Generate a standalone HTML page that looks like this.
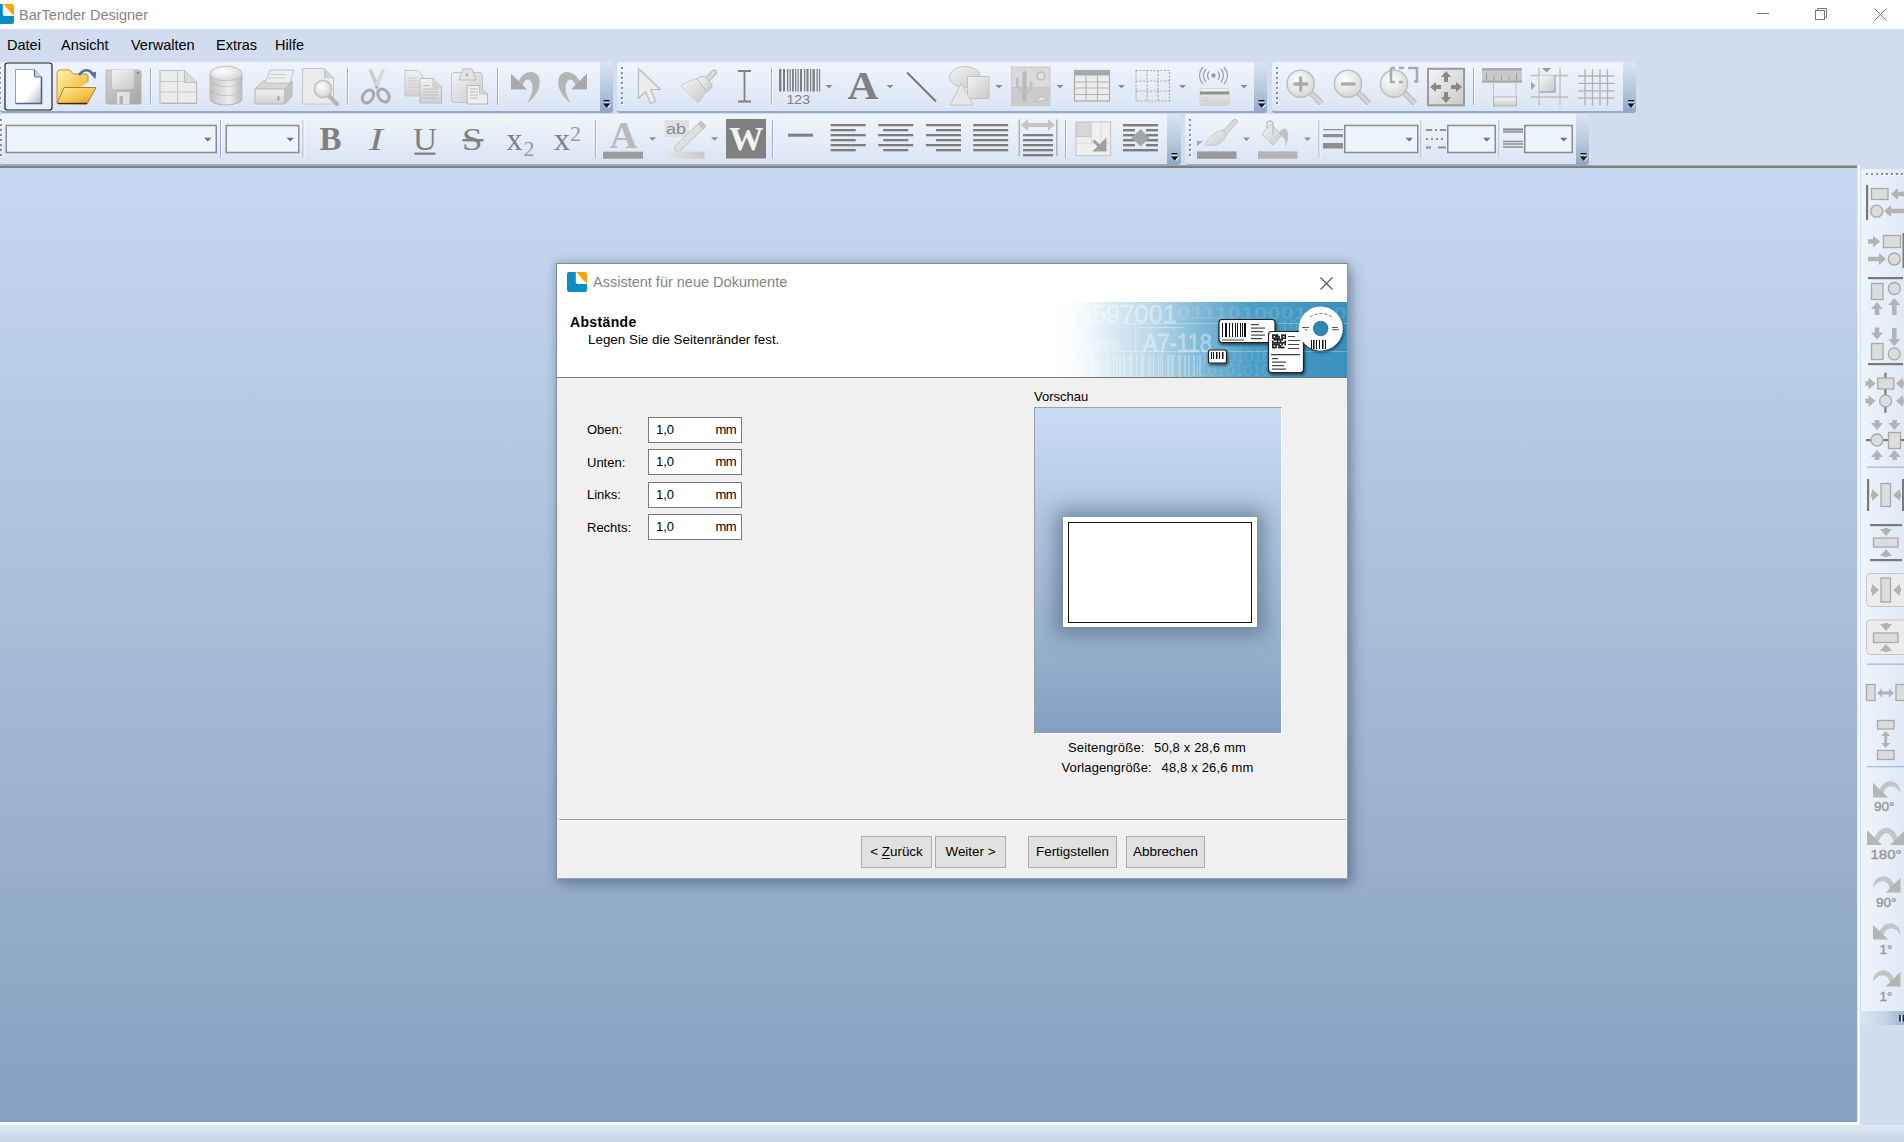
<!DOCTYPE html>
<html><head><meta charset="utf-8">
<style>
*{box-sizing:border-box;margin:0;padding:0}
html,body{width:1904px;height:1142px;overflow:hidden;background:#d1ddee;font-family:"Liberation Sans",sans-serif;position:relative}
.abs{position:absolute}
#title{left:0;top:0;width:1904px;height:29px;background:#fff}
#menu{left:0;top:29px;width:1904px;height:32px;background:#d1ddee}
#menu span{position:absolute;top:8px;font-size:14.5px;color:#000}
.tb{position:absolute;background:linear-gradient(#f0f5fc,#e3ebf7 60%,#d9e4f3);border-bottom:1px solid #94abcb;border-radius:3px 0 0 3px}
.chev{position:absolute;background:linear-gradient(#dbe5f2,#b3c4dc 60%,#8ea6c6);border-radius:0 3px 3px 0}
.grip{position:absolute;width:3px;background:repeating-linear-gradient(#7b92b5 0 2px,transparent 2px 5px)}
.sep{position:absolute;width:1px;background:#99aecb;border-right:1px solid #fff}
#canvas{left:0;top:168px;width:1857px;height:954px;background:linear-gradient(#c6d9f0,#a8bbd7 50%,#84a1c0)}
#status{left:0;top:1125px;width:1904px;height:17px;background:linear-gradient(#e0e9f5,#c5d3e6)}

.lbl{font-size:13px;color:#000;white-space:nowrap}
.inp{width:94px;height:26px;background:#fff;border:1px solid #7a7a7a;font-size:13px}
.inp .v{position:absolute;left:7px;top:4px}
.inp .u{position:absolute;right:5px;top:4px;letter-spacing:-0.6px}
.btn{height:32px;background:#e1e1e1;border:1px solid #adadad;font-size:13.4px;text-align:center;line-height:30px;color:#000;white-space:nowrap}
.btn u{text-decoration:underline;text-underline-offset:2px}
</style></head><body>
<div id="title" class="abs">
  <svg class="abs" style="left:-6.3px;top:3.8px" width="20" height="20" viewBox="0 0 20 20"><rect x="0" y="0" width="20" height="20" rx="2" fill="#0a8cc4"/><path d="M8.8 0H20V12H10.8a2 2 0 0 1-2-2Z" fill="#fff"/><path d="M9.2 0H18a2 2 0 0 1 2 2V12Z" fill="#ffa10a"/></svg>
  <div class="abs" style="left:19px;top:6.5px;font-size:14.5px;color:#858585">BarTender Designer</div>
  <div class="abs" style="left:1757px;top:13px;width:12px;height:1px;background:#777"></div>
  <svg class="abs" style="left:1815px;top:8px" width="14" height="14"><rect x="0.5" y="2.5" width="9" height="9" fill="none" stroke="#777"/><path d="M2.5 2.5V0.5H11.5V9.5H9.5" fill="none" stroke="#777"/></svg>
  <svg class="abs" style="left:1873.5px;top:8px" width="14" height="14"><path d="M0.5 0.5L12.5 12.5M12.5 0.5L0.5 12.5" stroke="#777" stroke-width="1"/></svg>
</div>
<div id="menu" class="abs">
  <span style="left:7px">Datei</span>
  <span style="left:61px">Ansicht</span>
  <span style="left:131px">Verwalten</span>
  <span style="left:216px">Extras</span>
  <span style="left:275px">Hilfe</span>
</div>
<!-- toolbar row 1 -->
<div class="tb" style="left:0;top:62px;width:600px;height:51px;border-bottom-width:2px"></div>
<div class="chev" style="left:600px;top:62px;width:13px;height:51px"></div>
<div class="tb" style="left:617px;top:62px;width:637px;height:51px;border-bottom-width:2px"></div>
<div class="chev" style="left:1254px;top:62px;width:13px;height:51px"></div>
<div class="tb" style="left:1272px;top:62px;width:351px;height:51px;border-bottom-width:2px"></div>
<div class="chev" style="left:1623px;top:62px;width:13px;height:51px"></div>
<!-- toolbar row 2 -->
<div class="tb" style="left:0;top:114px;width:1167px;height:51px"></div>
<div class="chev" style="left:1167px;top:114px;width:14px;height:51px"></div>
<div class="tb" style="left:1185px;top:114px;width:391px;height:51px"></div>
<div class="chev" style="left:1576px;top:114px;width:13px;height:51px"></div>
<div class="abs" style="left:0;top:165px;width:1857px;height:1px;background:#a3a7ae"></div><div class="abs" style="left:0;top:166px;width:1857px;height:2px;background:#808080"></div>
<div id="canvas" class="abs"></div>
<div class="abs" style="left:1857px;top:165px;width:3px;height:960px;background:#f6f7f8;border-left:1px solid #e4e6ea"></div><div class="abs" style="left:0;top:1122px;width:1860px;height:3px;background:#f6f7f8"></div>
<!-- right panel -->
<div class="abs" style="left:1861px;top:169px;width:43px;height:842px;border-radius:3px 0 0 0;background:linear-gradient(90deg,#eef4fc,#e0e9f5)"></div>
<div class="abs" style="left:1860px;top:1011px;width:44px;height:14px;background:linear-gradient(90deg,#d9e4f1,#c8d6e7 55%,#9db1cd)"></div>

<!--ICONS--><svg class="abs" style="left:0;top:0" width="1904" height="1142" viewBox="0 0 1904 1142"><defs>
<linearGradient id="gg" x1="0" y1="0" x2="1" y2="1"><stop offset="0" stop-color="#f4f4f4"/><stop offset="1" stop-color="#c9c9c9"/></linearGradient>
<linearGradient id="gv" x1="0" y1="0" x2="0" y2="1"><stop offset="0" stop-color="#f2f2f2"/><stop offset="1" stop-color="#cfcfcf"/></linearGradient>
<linearGradient id="gh" x1="0" y1="0" x2="1" y2="0"><stop offset="0" stop-color="#e6e6e6"/><stop offset="1" stop-color="#c4c4c4"/></linearGradient>
<linearGradient id="gd" x1="0" y1="0" x2="1" y2="0"><stop offset="0" stop-color="#d2d2d2"/><stop offset="0.5" stop-color="#bababa"/><stop offset="1" stop-color="#c9c9c9"/></linearGradient>
<linearGradient id="doc" x1="0" y1="0" x2="1" y2="1"><stop offset="0" stop-color="#ffffff"/><stop offset="0.6" stop-color="#ffffff"/><stop offset="1" stop-color="#aeb9cc"/></linearGradient>
<linearGradient id="fold1" x1="0" y1="0" x2="1" y2="1"><stop offset="0" stop-color="#fbf3b6"/><stop offset="0.5" stop-color="#f7cf5a"/><stop offset="1" stop-color="#eab13b"/></linearGradient>
<linearGradient id="fold2" x1="0" y1="0" x2="1" y2="1"><stop offset="0" stop-color="#fde99a"/><stop offset="0.6" stop-color="#f5c24a"/><stop offset="1" stop-color="#d98a12"/></linearGradient>
<linearGradient id="flop" x1="0" y1="0" x2="1" y2="1"><stop offset="0" stop-color="#d2d2d2"/><stop offset="1" stop-color="#a5a5a5"/></linearGradient>
<linearGradient id="bar" x1="0" y1="0" x2="1" y2="0"><stop offset="0" stop-color="#e6e6e6"/><stop offset="1" stop-color="#cacaca"/></linearGradient>
<linearGradient id="dbh" x1="0" y1="0" x2="1" y2="0"><stop offset="0" stop-color="#c2c2c2"/><stop offset="0.3" stop-color="#d6d6d6"/><stop offset="0.6" stop-color="#ececec"/><stop offset="1" stop-color="#bababa"/></linearGradient>
<radialGradient id="lens" cx="0.4" cy="0.35" r="0.7"><stop offset="0" stop-color="#ffffff"/><stop offset="1" stop-color="#d4d4d4"/></radialGradient>
<linearGradient id="chevv" x1="0" y1="0" x2="0" y2="1"><stop offset="0" stop-color="#dfe8f3"/><stop offset="0.55" stop-color="#b9c9de"/><stop offset="1" stop-color="#8ea5c5"/></linearGradient>
</defs><rect x="5" y="63" width="47" height="47" rx="2.5" fill="#e9f0f9" stroke="#1b1b1b" stroke-width="1.15"/><rect x="0" y="68" width="2" height="2" fill="#ffffff"/><rect x="-1" y="67" width="2" height="2" fill="#7890b4"/><rect x="0" y="73" width="2" height="2" fill="#ffffff"/><rect x="-1" y="72" width="2" height="2" fill="#7890b4"/><rect x="0" y="78" width="2" height="2" fill="#ffffff"/><rect x="-1" y="77" width="2" height="2" fill="#7890b4"/><rect x="0" y="83" width="2" height="2" fill="#ffffff"/><rect x="-1" y="82" width="2" height="2" fill="#7890b4"/><rect x="0" y="88" width="2" height="2" fill="#ffffff"/><rect x="-1" y="87" width="2" height="2" fill="#7890b4"/><rect x="0" y="93" width="2" height="2" fill="#ffffff"/><rect x="-1" y="92" width="2" height="2" fill="#7890b4"/><rect x="0" y="98" width="2" height="2" fill="#ffffff"/><rect x="-1" y="97" width="2" height="2" fill="#7890b4"/><rect x="0" y="103" width="2" height="2" fill="#ffffff"/><rect x="-1" y="102" width="2" height="2" fill="#7890b4"/><path d="M15.5 69.5h19l7 7.5v26.5h-26z" fill="url(#doc)" stroke="#8da0bd" stroke-width="1"/><path d="M41.5 77v26.5h-26" fill="none" stroke="#4f6690" stroke-width="1.6"/><path d="M34.5 69.5v6.5a1 1 0 0 0 1 1h6" fill="#c6d0e0" stroke="#5a6f96" stroke-width="1.2"/><path d="M57 103l0-30q0-3 3-3h10l3 4h13q2 0 2 2v6" fill="url(#fold1)" stroke="#b8964a" stroke-width="1"/><path d="M57 103.5l7-16h32l-9 16.5z" fill="url(#fold2)" stroke="#a9822e" stroke-width="1"/><path d="M58 103.5h29" stroke="#3a2a0a" stroke-width="1.4"/><path d="M79 75q7-9 14 -1" fill="none" stroke="#4b70a6" stroke-width="2.6"/><path d="M90 73.5l6 -1.8l-0.4 7.5z" fill="#4b70a6"/><path d="M106 70h33.5l1.5 1.5v32.5h-33.5q-1.5 0-1.5-1.5z" fill="url(#flop)" stroke="#b0b0b0" stroke-width="0.8"/><path d="M112 70h22v16q0 3-3 3h-16q-3 0-3-3z" fill="url(#gg)"/><rect x="117" y="92" width="12.5" height="12" fill="#e2e2e2"/><rect x="119.5" y="96" width="3.5" height="8" fill="#b5b5b5"/><rect x="137" y="72" width="2" height="2" fill="#8a8a8a"/><rect x="150" y="68" width="1" height="37" fill="#9db2cf"/><rect x="151" y="68" width="1" height="37" fill="#ffffff" fill-opacity="0.7"/><path d="M160 70.5h24.5l12 12v20.5h-36.5z" fill="#ececec" stroke="#bdbdbd" stroke-width="1.2"/><path d="M160.5 81.5h36M160.5 92h36M177.5 70.5v33" stroke="#c8c8c8" stroke-width="1.2"/><path d="M184.5 70.5v12h12" fill="#dadada" stroke="#bdbdbd" stroke-width="1"/><path d="M161 103.5h36" stroke="#b5b5b5" stroke-width="1.2"/><path d="M210 73.5V81A16 6 0 0 0 242 81V73.5A16 6 0 0 1 210 73.5Z" fill="url(#dbh)"/><path d="M210.5 81A15.5 6 0 0 0 241.5 81" fill="none" stroke="#b3b3b3" stroke-width="1.2"/><path d="M210 81V90A16 6 0 0 0 242 90V81A16 6 0 0 1 210 81Z" fill="url(#dbh)"/><path d="M210.5 90A15.5 6 0 0 0 241.5 90" fill="none" stroke="#b3b3b3" stroke-width="1.2"/><path d="M210 90V99A16 6 0 0 0 242 99V90A16 6 0 0 1 210 90Z" fill="url(#dbh)"/><path d="M210.5 99A15.5 6 0 0 0 241.5 99" fill="none" stroke="#b3b3b3" stroke-width="1.2"/><path d="M210 73.5V99M242 73.5V99" stroke="#bdbdbd" stroke-width="1"/><ellipse cx="226" cy="73.5" rx="16" ry="7.3" fill="url(#lens)" stroke="#c2c2c2" stroke-width="1"/><path d="M255 89l8-8h28v8" fill="#d6d6d6" stroke="#bdbdbd" stroke-width="1"/><path d="M265 83l5-13h24l-4 13z" fill="#efefef" stroke="#c2c2c2" stroke-width="1"/><path d="M269.5 74.5h17M268.5 78h17" stroke="#c9c9c9" stroke-width="1"/><path d="M255 89h30v15h-30z" fill="url(#gv)" stroke="#b8b8b8" stroke-width="1"/><path d="M285 89l7-8v15l-7 8z" fill="#c3c3c3" stroke="#b5b5b5" stroke-width="1"/><rect x="277.5" y="96.5" width="2" height="4" fill="#999"/><path d="M302.5 68.5h22l9 9v26.5h-31z" fill="#ebebeb" stroke="#c6c6c6" stroke-width="1"/><path d="M324.5 68.5v9h9" fill="#d4d4d4" stroke="#c6c6c6" stroke-width="1"/><path d="M328 95l9 9" stroke="#b5b5b5" stroke-width="4" stroke-linecap="round"/><circle cx="323" cy="89" r="8.5" fill="url(#lens)" stroke="#bdbdbd" stroke-width="1.5"/><rect x="347" y="68" width="1" height="37" fill="#9db2cf"/><rect x="348" y="68" width="1" height="37" fill="#ffffff" fill-opacity="0.7"/><path d="M368.5 69.5l3.5 0.3l7.5 16.5l-3 4z" fill="#cbcbcb"/><path d="M385 69.5l-3.5 0.3l-7.5 16.5l3 4z" fill="#d6d6d6"/><ellipse cx="368" cy="96.5" rx="5" ry="7" transform="rotate(35 368 96.5)" fill="none" stroke="#a9a9a9" stroke-width="3"/><ellipse cx="383.5" cy="95.5" rx="5" ry="7" transform="rotate(-35 383.5 95.5)" fill="none" stroke="#a9a9a9" stroke-width="3"/><circle cx="376.5" cy="87.5" r="1" fill="#999"/><path d="M405 70.5h12.5l5.5 5.5v20h-18z" fill="url(#gv)" stroke="#c4c4c4" stroke-width="1"/><path d="M408 78h9M408 81h11M408 84h11M408 87h11" stroke="#c6c6c6" stroke-width="0.9"/><path d="M420 78.5h13l8.5 8.5v16h-21.5z" fill="url(#gv)" stroke="#b9b9b9" stroke-width="1"/><path d="M433 78.5v8.5h8.5" fill="#d8d8d8" stroke="#c2c2c2" stroke-width="0.9"/><path d="M423 85.5h7M423 89h15M423 92h15M423 95h15M423 98h15" stroke="#bdbdbd" stroke-width="1"/><rect x="451.5" y="72.5" width="31" height="30" rx="3" fill="url(#gg)" stroke="#c2c2c2" stroke-width="1"/><path d="M459 80l4-11h9l4 11z" fill="#e4e4e4" stroke="#bdbdbd" stroke-width="1"/><circle cx="467" cy="75" r="1.4" fill="#aaa"/><path d="M467 85.5h12l8.5 8.5v10h-20.5z" fill="#eeeeee" stroke="#b5b5b5" stroke-width="1"/><path d="M479.5 85.5v8.5h8" fill="#d6d6d6" stroke="#bdbdbd" stroke-width="0.9"/><path d="M470 89h8M470 92h8M470 95h8M470 98h8" stroke="#bbbbbb" stroke-width="1"/><rect x="497" y="68" width="1" height="37" fill="#9db2cf"/><rect x="498" y="68" width="1" height="37" fill="#ffffff" fill-opacity="0.7"/><path d="M518 83 C521 72 536 67 539.5 79 C541.5 89 534 98 527 103.5 C531.5 96 534 88 531.5 82.5 C529 77.5 524 79 522.5 86 Z" fill="#b5b5b5"/><path d="M511 73.5 L511 89.5 L527 89.5 Z" fill="#a9a9a9"/><path d="M 580 83 C 577 72 562 67 558.5 79 C 556.5 89 564 98 571 103.5 C 566.5 96 564 88 566.5 82.5 C 569 77.5 574 79 575.5 86 Z" fill="#b5b5b5"/><path d="M 587 73.5 L 587 89.5 L 571 89.5 Z" fill="#a9a9a9"/><rect x="603.5" y="100" width="6" height="1.6" fill="#111"/><rect x="603.5" y="101.6" width="6" height="1" fill="#fff" fill-opacity="0.8"/><path d="M603.0 103.5h7.5l-3.75 4.2z" fill="#111"/><path d="M607.1 107.4l3.6-3.9v1.5l-2.4 2.7z" fill="#fff"/><rect x="622" y="68" width="2" height="2" fill="#ffffff"/><rect x="621" y="67" width="2" height="2" fill="#7890b4"/><rect x="622" y="73" width="2" height="2" fill="#ffffff"/><rect x="621" y="72" width="2" height="2" fill="#7890b4"/><rect x="622" y="78" width="2" height="2" fill="#ffffff"/><rect x="621" y="77" width="2" height="2" fill="#7890b4"/><rect x="622" y="83" width="2" height="2" fill="#ffffff"/><rect x="621" y="82" width="2" height="2" fill="#7890b4"/><rect x="622" y="88" width="2" height="2" fill="#ffffff"/><rect x="621" y="87" width="2" height="2" fill="#7890b4"/><rect x="622" y="93" width="2" height="2" fill="#ffffff"/><rect x="621" y="92" width="2" height="2" fill="#7890b4"/><rect x="622" y="98" width="2" height="2" fill="#ffffff"/><rect x="621" y="97" width="2" height="2" fill="#7890b4"/><rect x="622" y="103" width="2" height="2" fill="#ffffff"/><rect x="621" y="102" width="2" height="2" fill="#7890b4"/><path d="M638.5 68.5v30l7-7l5 12l5-2.5l-5-11.5h10z" fill="#ececec" stroke="#bcbcbc" stroke-width="1.2" stroke-linejoin="round"/><path d="M707.5 79.5L714 72.5" stroke="#bdbdbd" stroke-width="6" stroke-linecap="round"/><path d="M707.5 79.5L714 72.5" stroke="#d9d9d9" stroke-width="3.5" stroke-linecap="round"/><path d="M681 85.5Q688 81 697 78.5L706.5 91.5Q703 97 698 102.5Q689 94 681 85.5Z" fill="url(#gg)" stroke="#c6c6c6" stroke-width="0.9"/><path d="M697 78.5Q700.5 75.5 705 76.5L712 84.5Q712.5 89 706.5 91.5Z" fill="url(#gg)" stroke="#b9b9b9" stroke-width="0.9"/><path d="M744.5 71v31" stroke="#808080" stroke-width="1.8"/><path d="M738 71h13M738 101.5h13" stroke="#808080" stroke-width="2.2"/><rect x="771" y="68" width="1" height="37" fill="#9db2cf"/><rect x="772" y="68" width="1" height="37" fill="#ffffff" fill-opacity="0.7"/><rect x="779" y="69" width="2.4" height="22.5" fill="#7f7f7f"/><rect x="783" y="69" width="2" height="22.5" fill="#7f7f7f"/><rect x="787" y="69" width="1.3" height="22.5" fill="#7f7f7f"/><rect x="789.6" y="69" width="1.2" height="22.5" fill="#7f7f7f"/><rect x="792" y="69" width="1.8" height="22.5" fill="#7f7f7f"/><rect x="795" y="69" width="1.2" height="22.5" fill="#7f7f7f"/><rect x="797.5" y="69" width="1.2" height="22.5" fill="#7f7f7f"/><rect x="800" y="69" width="2" height="22.5" fill="#7f7f7f"/><rect x="804" y="69" width="1.3" height="22.5" fill="#7f7f7f"/><rect x="806.5" y="69" width="2" height="22.5" fill="#7f7f7f"/><rect x="810" y="69" width="1.2" height="22.5" fill="#7f7f7f"/><rect x="812.5" y="69" width="2.4" height="22.5" fill="#7f7f7f"/><rect x="816.5" y="69" width="1.3" height="22.5" fill="#7f7f7f"/><rect x="819" y="69" width="1.2" height="22.5" fill="#7f7f7f"/><text x="786.5" y="104" font-family="Liberation Sans" font-size="13" fill="#7f7f7f" textLength="23.5" lengthAdjust="spacingAndGlyphs">123</text><path d="M825.5 85h7l-3.5 3.5z" fill="#8c8c8c"/><text x="847.5" y="99" font-family="Liberation Serif" font-weight="bold" font-size="39" fill="#808080" textLength="31" lengthAdjust="spacingAndGlyphs">A</text><path d="M886.5 85h7l-3.5 3.5z" fill="#8c8c8c"/><path d="M907 72.5l29 29" stroke="#777" stroke-width="2"/><ellipse cx="965" cy="77" rx="15.5" ry="10.5" fill="url(#gg)" stroke="#c4c4c4" stroke-width="1"/><rect x="967.5" y="76.5" width="21.5" height="22" fill="url(#gg)" stroke="#c2c2c2" stroke-width="1"/><path d="M961.5 83l11.5 22h-23z" fill="#e6e6e6" stroke="#c6c6c6" stroke-width="1"/><path d="M995.5 85h7l-3.5 3.5z" fill="#8c8c8c"/><rect x="1011" y="66.5" width="39.5" height="39.5" fill="#cbcbcb"/><rect x="1012" y="67.5" width="37.5" height="19.5" fill="#dadada"/><rect x="1011" y="87" width="39.5" height="1" fill="#c4c4c4"/><path d="M1022.5 101.5V73a2 2 0 0 1 4 0V101.5z" fill="#b9b9b9"/><path d="M1016 79a1.2 1.2 0 0 1 2.4 0v6l5 6v3l-7.4-8z" fill="#bdbdbd"/><path d="M1029.5 83a1.5 1.5 0 0 1 3 0v5l-6 7v-3l3-3.5z" fill="#c2c2c2"/><circle cx="1041" cy="76" r="3.8" fill="#e3e3e3" stroke="#b7b7b7" stroke-width="1.3"/><path d="M1035 101.5l6.5-5l7 3z" fill="#e6e6e6" stroke="#b9b9b9" stroke-width="0.8"/><path d="M1056.5 85h7l-3.5 3.5z" fill="#8c8c8c"/><rect x="1074.5" y="70.5" width="35" height="30.5" fill="#ececec" stroke="#aaaaaa" stroke-width="1.2"/><rect x="1074" y="70" width="36" height="5.5" fill="#a8a8a8"/><path d="M1074.5 82h35M1074.5 88h35M1074.5 94.5h35M1086 75.5v25.5M1097.5 75.5v25.5" stroke="#b3b3b3" stroke-width="1.1"/><path d="M1118 85h7l-3.5 3.5z" fill="#8c8c8c"/><path d="M1136 70.5h33.5v30.5h-33.5zM1136 81h33.5M1136 91h33.5M1147 70.5v30.5M1158 70.5v30.5" fill="none" stroke="#a9a9a9" stroke-width="1.2" stroke-dasharray="2 1.5"/><path d="M1179 85h7l-3.5 3.5z" fill="#8c8c8c"/><circle cx="1213.5" cy="75.5" r="2.2" fill="#999"/><path d="M1209 71.5q-3 4 0 8M1218 71.5q3 4 0 8M1206 69q-5 6.5 0 13M1221 69q5 6.5 0 13M1203 67q-7 8.5 0 17M1224 67q7 8.5 0 17" fill="none" stroke="#9f9f9f" stroke-width="1.3"/><rect x="1200" y="88.5" width="29" height="17" rx="2.5" fill="url(#gv)" stroke="#cfcfcf" stroke-width="0.8"/><rect x="1200" y="91.5" width="29" height="3" fill="#8f8f8f"/><ellipse cx="1205.5" cy="99" rx="2.5" ry="1.8" fill="none" stroke="#c8c8c8" stroke-width="0.9"/><path d="M1240.5 85h7l-3.5 3.5z" fill="#8c8c8c"/><rect x="1258.5" y="100" width="6" height="1.6" fill="#111"/><rect x="1258.5" y="101.6" width="6" height="1" fill="#fff" fill-opacity="0.8"/><path d="M1258.0 103.5h7.5l-3.75 4.2z" fill="#111"/><path d="M1262.1 107.4l3.6-3.9v1.5l-2.4 2.7z" fill="#fff"/><rect x="1277" y="68" width="2" height="2" fill="#ffffff"/><rect x="1276" y="67" width="2" height="2" fill="#7890b4"/><rect x="1277" y="73" width="2" height="2" fill="#ffffff"/><rect x="1276" y="72" width="2" height="2" fill="#7890b4"/><rect x="1277" y="78" width="2" height="2" fill="#ffffff"/><rect x="1276" y="77" width="2" height="2" fill="#7890b4"/><rect x="1277" y="83" width="2" height="2" fill="#ffffff"/><rect x="1276" y="82" width="2" height="2" fill="#7890b4"/><rect x="1277" y="88" width="2" height="2" fill="#ffffff"/><rect x="1276" y="87" width="2" height="2" fill="#7890b4"/><rect x="1277" y="93" width="2" height="2" fill="#ffffff"/><rect x="1276" y="92" width="2" height="2" fill="#7890b4"/><rect x="1277" y="98" width="2" height="2" fill="#ffffff"/><rect x="1276" y="97" width="2" height="2" fill="#7890b4"/><rect x="1277" y="103" width="2" height="2" fill="#ffffff"/><rect x="1276" y="102" width="2" height="2" fill="#7890b4"/><path d="M1309.2 91l12.5 12.5" stroke="#b9b9b9" stroke-width="6" stroke-linecap="butt"/><path d="M1309.2 91l12.5 12.5" stroke="#d6d6d6" stroke-width="3.6"/><circle cx="1300.7" cy="83.7" r="13.6" fill="url(#lens)" stroke="#bdbdbd" stroke-width="1.4"/><path d="M1293.5 84h14.5M1300.7 76.5v15" stroke="#aaaaaa" stroke-width="3.3"/><path d="M1356.5 91l12.5 12.5" stroke="#b9b9b9" stroke-width="6" stroke-linecap="butt"/><path d="M1356.5 91l12.5 12.5" stroke="#d6d6d6" stroke-width="3.6"/><circle cx="1348" cy="83.7" r="13.6" fill="url(#lens)" stroke="#bdbdbd" stroke-width="1.4"/><path d="M1341 84h14.5" stroke="#aaaaaa" stroke-width="3.3"/><path d="M1402.5 91l12.5 12.5" stroke="#b9b9b9" stroke-width="6" stroke-linecap="butt"/><path d="M1402.5 91l12.5 12.5" stroke="#d6d6d6" stroke-width="3.6"/><circle cx="1394" cy="83.7" r="13.6" fill="url(#lens)" stroke="#bdbdbd" stroke-width="1.4"/><path d="M1391 68h4M1391 68v14h4M1399 82h4M1399 68h5M1408 68h9v13.5h-3" fill="none" stroke="#aaaaaa" stroke-width="2.6"/><rect x="1428" y="68.8" width="36" height="36.5" fill="url(#gg)" stroke="#9a9a9a" stroke-width="2"/><path d="M1446 71l5 6h-3v5h-4v-5h-3zM1446 103l5-6h-3v-5h-4v5h-3zM1430 87l6-5v3h5v4h-5v3zM1462 87l-6-5v3h-5v4h5v3z" fill="#888"/><rect x="1473" y="68" width="1" height="37" fill="#9db2cf"/><rect x="1474" y="68" width="1" height="37" fill="#ffffff" fill-opacity="0.7"/><rect x="1482" y="68" width="40" height="14.5" fill="#c9c9c9"/><rect x="1482" y="68" width="40" height="2.5" fill="#a9a9a9"/><rect x="1482" y="80.5" width="40" height="2.2" fill="#a9a9a9"/><path d="M1486.5 73v7.5M1494 76v4.5M1501.5 76v4.5M1509 76v4.5M1516.5 73v7.5" stroke="#9a9a9a" stroke-width="1"/><path d="M1493.5 84v12M1516 84v12" stroke="#9c9c9c" stroke-width="1" stroke-dasharray="1.2 1.2"/><rect x="1493.5" y="97" width="23" height="9" fill="url(#gv)" stroke="#b2b2b2" stroke-width="1"/><path d="M1531 75.5h37M1531 97h37M1539 68v37.5M1560 68v37.5" stroke="#bdbdbd" stroke-width="1.3"/><path d="M1542 68h9l-4.5 4.5z" fill="#9a9a9a"/><path d="M1531 81.5v8.5l4.5-4.25z" fill="#a5a5a5"/><rect x="1539.5" y="75.5" width="15.5" height="16.5" fill="url(#gg)"/><path d="M1555 75.5v16.5h-15.5" fill="none" stroke="#a8a8a8" stroke-width="1.3"/><path d="M1585 69v36.5M1592.5 69v36.5M1600 69v36.5M1607.5 69v36.5M1578 76h36.5M1578 83.3h36.5M1578 90.8h36.5M1578 98.2h36.5" stroke="#b2b2b2" stroke-width="1.3"/><rect x="1628" y="100" width="6" height="1.6" fill="#111"/><rect x="1628" y="101.6" width="6" height="1" fill="#fff" fill-opacity="0.8"/><path d="M1627.5 103.5h7.5l-3.75 4.2z" fill="#111"/><path d="M1631.6 107.4l3.6-3.9v1.5l-2.4 2.7z" fill="#fff"/><rect x="1" y="120" width="2" height="2" fill="#ffffff"/><rect x="0" y="119" width="2" height="2" fill="#7890b4"/><rect x="1" y="125" width="2" height="2" fill="#ffffff"/><rect x="0" y="124" width="2" height="2" fill="#7890b4"/><rect x="1" y="130" width="2" height="2" fill="#ffffff"/><rect x="0" y="129" width="2" height="2" fill="#7890b4"/><rect x="1" y="135" width="2" height="2" fill="#ffffff"/><rect x="0" y="134" width="2" height="2" fill="#7890b4"/><rect x="1" y="140" width="2" height="2" fill="#ffffff"/><rect x="0" y="139" width="2" height="2" fill="#7890b4"/><rect x="1" y="145" width="2" height="2" fill="#ffffff"/><rect x="0" y="144" width="2" height="2" fill="#7890b4"/><rect x="1" y="150" width="2" height="2" fill="#ffffff"/><rect x="0" y="149" width="2" height="2" fill="#7890b4"/><rect x="1" y="155" width="2" height="2" fill="#ffffff"/><rect x="0" y="154" width="2" height="2" fill="#7890b4"/><rect x="6.25" y="125.5" width="210.0" height="27.0" fill="#eef4fc" stroke="#8c8c8c" stroke-width="1.5"/><path d="M204 137.7h7.5l-3.75 3.8z" fill="#707070"/><rect x="220" y="120" width="1" height="38" fill="#9db2cf"/><rect x="221" y="120" width="1" height="38" fill="#ffffff" fill-opacity="0.7"/><rect x="226.25" y="125.5" width="72.5" height="27.0" fill="#eef4fc" stroke="#8c8c8c" stroke-width="1.5"/><path d="M286.5 137.7h7.5l-3.75 3.8z" fill="#707070"/><rect x="302.5" y="120" width="1" height="38" fill="#9db2cf"/><rect x="303.5" y="120" width="1" height="38" fill="#ffffff" fill-opacity="0.7"/><text x="319.5" y="149.8" font-family="Liberation Serif" font-weight="bold" font-size="33" fill="#808080" textLength="22" lengthAdjust="spacingAndGlyphs">B</text><text x="369" y="149.8" font-family="Liberation Serif" font-style="italic" font-size="32" fill="#808080" textLength="14" lengthAdjust="spacingAndGlyphs">I</text><text x="413" y="149.8" font-family="Liberation Serif" font-size="30.5" fill="#808080" textLength="24" lengthAdjust="spacingAndGlyphs">U</text><rect x="414.5" y="152.6" width="21" height="2.2" fill="#808080"/><text x="462" y="149.8" font-family="Liberation Serif" font-size="30.5" fill="#808080" textLength="20.5" lengthAdjust="spacingAndGlyphs">S</text><rect x="462.5" y="139" width="21" height="2.4" fill="#808080"/><text x="506.5" y="149.8" font-family="Liberation Serif" font-size="32" fill="#808080" textLength="16" lengthAdjust="spacingAndGlyphs">x</text><text x="523.5" y="156" font-family="Liberation Serif" font-size="21" fill="#9a9a9a" textLength="11" lengthAdjust="spacingAndGlyphs">2</text><text x="554" y="149.8" font-family="Liberation Serif" font-size="32" fill="#808080" textLength="16" lengthAdjust="spacingAndGlyphs">x</text><text x="570" y="141" font-family="Liberation Serif" font-size="21" fill="#9a9a9a" textLength="11" lengthAdjust="spacingAndGlyphs">2</text><rect x="595" y="120" width="1" height="38" fill="#9db2cf"/><rect x="596" y="120" width="1" height="38" fill="#ffffff" fill-opacity="0.7"/><text x="609.5" y="148" font-family="Liberation Serif" font-weight="bold" font-size="37" fill="#b9b9b9" textLength="28" lengthAdjust="spacingAndGlyphs">A</text><rect x="603" y="151.7" width="40" height="7" fill="#9c9c9c"/><path d="M649 137.2h7l-3.5 3.5z" fill="#8c8c8c"/><rect x="664.5" y="120" width="24.5" height="17" fill="#e0e0e0"/><text x="666" y="134" font-family="Liberation Sans" font-size="14" fill="#8a8a8a" textLength="20" lengthAdjust="spacingAndGlyphs">ab</text><path d="M675 146l25-24l5 5l-25 24h-5z" fill="url(#gg)" stroke="#c2c2c2" stroke-width="1"/><path d="M698 124l3-3l5 5l-3 3z" fill="#c3c3c3" stroke="#bdbdbd" stroke-width="0.8"/><rect x="664.5" y="151.7" width="40" height="7" fill="url(#bar)"/><path d="M711 137.2h7l-3.5 3.5z" fill="#8c8c8c"/><rect x="726" y="119" width="40" height="39.5" fill="#808080"/><text x="729" y="150" font-family="Liberation Serif" font-weight="bold" font-size="33" fill="#f2f2f2" textLength="34.5" lengthAdjust="spacingAndGlyphs">W</text><rect x="772" y="120" width="1" height="38" fill="#9db2cf"/><rect x="773" y="120" width="1" height="38" fill="#ffffff" fill-opacity="0.7"/><rect x="788" y="133.7" width="25" height="3" fill="#808080"/><rect x="830.7" y="124" width="35" height="2.3" fill="#7d7d7d"/><rect x="830.7" y="129" width="25" height="2.3" fill="#7d7d7d"/><rect x="830.7" y="134" width="35" height="2.3" fill="#7d7d7d"/><rect x="830.7" y="139" width="25" height="2.3" fill="#7d7d7d"/><rect x="830.7" y="144" width="35" height="2.3" fill="#7d7d7d"/><rect x="830.7" y="149" width="25" height="2.3" fill="#7d7d7d"/><rect x="878.2" y="124" width="35" height="2.3" fill="#7d7d7d"/><rect x="883.2" y="129" width="25" height="2.3" fill="#7d7d7d"/><rect x="878.2" y="134" width="35" height="2.3" fill="#7d7d7d"/><rect x="883.2" y="139" width="25" height="2.3" fill="#7d7d7d"/><rect x="878.2" y="144" width="35" height="2.3" fill="#7d7d7d"/><rect x="883.2" y="149" width="25" height="2.3" fill="#7d7d7d"/><rect x="926" y="124" width="35" height="2.3" fill="#7d7d7d"/><rect x="936" y="129" width="25" height="2.3" fill="#7d7d7d"/><rect x="926" y="134" width="35" height="2.3" fill="#7d7d7d"/><rect x="936" y="139" width="25" height="2.3" fill="#7d7d7d"/><rect x="926" y="144" width="35" height="2.3" fill="#7d7d7d"/><rect x="936" y="149" width="25" height="2.3" fill="#7d7d7d"/><rect x="973.2" y="124" width="35" height="2.3" fill="#7d7d7d"/><rect x="973.2" y="129" width="35" height="2.3" fill="#7d7d7d"/><rect x="973.2" y="134" width="35" height="2.3" fill="#7d7d7d"/><rect x="973.2" y="139" width="35" height="2.3" fill="#7d7d7d"/><rect x="973.2" y="144" width="35" height="2.3" fill="#7d7d7d"/><rect x="973.2" y="149" width="35" height="2.3" fill="#7d7d7d"/><rect x="1018.5" y="119.5" width="1.6" height="36.5" fill="#b5b5b5"/><rect x="1056" y="119.5" width="1.6" height="36.5" fill="#b5b5b5"/><path d="M1021 125l7-6v4h20v-4l7 6l-7 6v-4h-20v4z" fill="#c4c4c4"/><rect x="1023" y="134" width="30" height="2.3" fill="#7d7d7d"/><rect x="1023" y="139" width="30" height="2.3" fill="#7d7d7d"/><rect x="1023" y="144" width="30" height="2.3" fill="#7d7d7d"/><rect x="1023" y="149" width="30" height="2.3" fill="#7d7d7d"/><rect x="1023" y="154" width="30" height="2.3" fill="#7d7d7d"/><rect x="1065" y="120" width="1" height="38" fill="#9db2cf"/><rect x="1066" y="120" width="1" height="38" fill="#ffffff" fill-opacity="0.7"/><rect x="1076" y="122" width="34.5" height="33.5" fill="#efefef" stroke="#c9c9c9" stroke-width="1.2"/><path d="M1076.5 143h34M1091.5 122.5v20.5M1101 122.5v20.5" stroke="#dadada" stroke-width="1"/><rect x="1076.6" y="122.6" width="14" height="14" fill="#d7d7d7" stroke="#c9c9c9" stroke-width="1"/><path d="M1093.5 140.5l8 8M1105 141v9h-9z" stroke="#9f9f9f" stroke-width="3" fill="#9f9f9f"/><rect x="1123" y="124" width="35" height="2.4" fill="#7d7d7d"/><rect x="1123" y="149" width="35" height="2.4" fill="#7d7d7d"/><rect x="1123" y="129" width="12" height="2.4" fill="#7d7d7d"/><rect x="1146" y="129" width="12" height="2.4" fill="#7d7d7d"/><rect x="1123" y="134" width="12" height="2.4" fill="#7d7d7d"/><rect x="1146" y="134" width="12" height="2.4" fill="#7d7d7d"/><rect x="1123" y="139" width="12" height="2.4" fill="#7d7d7d"/><rect x="1146" y="139" width="12" height="2.4" fill="#7d7d7d"/><rect x="1123" y="144" width="12" height="2.4" fill="#7d7d7d"/><rect x="1146" y="144" width="12" height="2.4" fill="#7d7d7d"/><path d="M1140.6 129l9 8.7l-9 8.7l-9-8.7z" fill="#a5a5a5"/><rect x="1171.5" y="153" width="6" height="1.6" fill="#111"/><rect x="1171.5" y="154.6" width="6" height="1" fill="#fff" fill-opacity="0.8"/><path d="M1171.0 156.5h7.5l-3.75 4.2z" fill="#111"/><path d="M1175.1 160.4l3.6-3.9v1.5l-2.4 2.7z" fill="#fff"/><rect x="1190" y="120" width="2" height="2" fill="#ffffff"/><rect x="1189" y="119" width="2" height="2" fill="#7890b4"/><rect x="1190" y="125" width="2" height="2" fill="#ffffff"/><rect x="1189" y="124" width="2" height="2" fill="#7890b4"/><rect x="1190" y="130" width="2" height="2" fill="#ffffff"/><rect x="1189" y="129" width="2" height="2" fill="#7890b4"/><rect x="1190" y="135" width="2" height="2" fill="#ffffff"/><rect x="1189" y="134" width="2" height="2" fill="#7890b4"/><rect x="1190" y="140" width="2" height="2" fill="#ffffff"/><rect x="1189" y="139" width="2" height="2" fill="#7890b4"/><rect x="1190" y="145" width="2" height="2" fill="#ffffff"/><rect x="1189" y="144" width="2" height="2" fill="#7890b4"/><rect x="1190" y="150" width="2" height="2" fill="#ffffff"/><rect x="1189" y="149" width="2" height="2" fill="#7890b4"/><rect x="1190" y="155" width="2" height="2" fill="#ffffff"/><rect x="1189" y="154" width="2" height="2" fill="#7890b4"/><path d="M1205 145q2-6 9-11q6-4 10-4l2.5 4q-1 5-6 9q-7 4-15 2z" fill="url(#gg)" stroke="#c7c7c7" stroke-width="1"/><path d="M1223 131l10-11q3-2 4 0q1 2-1 4l-10 11z" fill="#d9d9d9" stroke="#c4c4c4" stroke-width="1"/><path d="M1197 141h6l-6 5z" fill="#a5a5a5"/><rect x="1197" y="151.4" width="39.5" height="7.4" fill="#9a9a9a"/><path d="M1243 137.6h7l-3.5 3.5z" fill="#8c8c8c"/><path d="M1262 134l9-10l11 11l-9 10z" fill="url(#gg)" stroke="#c4c4c4" stroke-width="1"/><path d="M1267 128v-4q0-3 3-3t3 3v11" fill="none" stroke="#bfbfbf" stroke-width="1.4"/><path d="M1280 131q6-6 8 2q1 7-3 14q2-8-5-12z" fill="#c2c2c2"/><rect x="1258" y="151.4" width="39.5" height="7.4" fill="#b5b5b5"/><path d="M1304 137.6h7l-3.5 3.5z" fill="#8c8c8c"/><rect x="1318.5" y="120" width="1" height="38" fill="#9db2cf"/><rect x="1319.5" y="120" width="1" height="38" fill="#ffffff" fill-opacity="0.7"/><rect x="1323" y="129" width="20" height="1.2" fill="#8f8f8f"/><rect x="1323" y="134" width="20" height="3.2" fill="#8f8f8f"/><rect x="1323" y="143" width="20" height="5.5" fill="#8f8f8f"/><rect x="1344.75" y="125.5" width="73.0" height="27.0" fill="#eef4fc" stroke="#8c8c8c" stroke-width="1.5"/><path d="M1405.5 137.7h7.5l-3.75 3.8z" fill="#707070"/><rect x="1420.5" y="120" width="1" height="38" fill="#9db2cf"/><rect x="1421.5" y="120" width="1" height="38" fill="#ffffff" fill-opacity="0.7"/><path d="M1426 130h6M1435 130h2M1440 130h6M1426 139h2M1431 139h2M1436 139h2M1441 139h2M1426 147.5h5M1438 147.5h8" stroke="#8f8f8f" stroke-width="2.2"/><rect x="1447.75" y="125.5" width="47.5" height="27.0" fill="#eef4fc" stroke="#8c8c8c" stroke-width="1.5"/><path d="M1483 137.7h7.5l-3.75 3.8z" fill="#707070"/><rect x="1498.5" y="120" width="1" height="38" fill="#9db2cf"/><rect x="1499.5" y="120" width="1" height="38" fill="#ffffff" fill-opacity="0.7"/><path d="M1503 129.5h20M1503 132h20M1503 141.5h20M1503 144h20M1503 147h20" stroke="#8f8f8f" stroke-width="1.3"/><rect x="1503" y="128.5" width="20" height="2" fill="#8f8f8f"/><rect x="1524.75" y="125.5" width="47.5" height="27.0" fill="#eef4fc" stroke="#8c8c8c" stroke-width="1.5"/><path d="M1560 137.7h7.5l-3.75 3.8z" fill="#707070"/><rect x="1580.5" y="153" width="6" height="1.6" fill="#111"/><rect x="1580.5" y="154.6" width="6" height="1" fill="#fff" fill-opacity="0.8"/><path d="M1580.0 156.5h7.5l-3.75 4.2z" fill="#111"/><path d="M1584.1 160.4l3.6-3.9v1.5l-2.4 2.7z" fill="#fff"/><rect x="1867" y="174" width="2" height="2" fill="#ffffff"/><rect x="1866" y="173" width="2" height="2" fill="#7890b4"/><rect x="1872" y="174" width="2" height="2" fill="#ffffff"/><rect x="1871" y="173" width="2" height="2" fill="#7890b4"/><rect x="1877" y="174" width="2" height="2" fill="#ffffff"/><rect x="1876" y="173" width="2" height="2" fill="#7890b4"/><rect x="1882" y="174" width="2" height="2" fill="#ffffff"/><rect x="1881" y="173" width="2" height="2" fill="#7890b4"/><rect x="1887" y="174" width="2" height="2" fill="#ffffff"/><rect x="1886" y="173" width="2" height="2" fill="#7890b4"/><rect x="1892" y="174" width="2" height="2" fill="#ffffff"/><rect x="1891" y="173" width="2" height="2" fill="#7890b4"/><rect x="1897" y="174" width="2" height="2" fill="#ffffff"/><rect x="1896" y="173" width="2" height="2" fill="#7890b4"/><rect x="1902" y="174" width="2" height="2" fill="#ffffff"/><rect x="1901" y="173" width="2" height="2" fill="#7890b4"/><rect x="1866" y="185" width="2.2" height="35" fill="#7a7a7a"/><rect x="1871.5" y="188.5" width="16.5" height="11" fill="#dcdcdc" stroke="#a8a8a8" stroke-width="1.3"/><circle cx="1876.7" cy="211.2" r="6" fill="#dcdcdc" stroke="#a8a8a8" stroke-width="1.3"/><path d="M1891 194l7-6v3.7h9v4.6h-9v3.7z" fill="#b3b3b3"/><path d="M1884 211l7-6v3.7h13v4.6h-13v3.7z" fill="#b3b3b3"/><rect x="1902.5" y="233" width="2.2" height="35" fill="#7a7a7a"/><rect x="1883.5" y="235.5" width="17" height="12" fill="#dcdcdc" stroke="#a8a8a8" stroke-width="1.3"/><circle cx="1894.3" cy="259" r="6" fill="#dcdcdc" stroke="#a8a8a8" stroke-width="1.3"/><path d="M1880 241.5l-7-6v3.7h-5v4.6h5v3.7z" fill="#b3b3b3"/><path d="M1886 259l-7-6v3.7h-11v4.6h11v3.7z" fill="#b3b3b3"/><rect x="1868" y="277" width="35" height="2.2" fill="#7a7a7a"/><rect x="1871.5" y="283.5" width="11.5" height="16" fill="#dcdcdc" stroke="#a8a8a8" stroke-width="1.3"/><circle cx="1894.3" cy="288.5" r="6" fill="#dcdcdc" stroke="#a8a8a8" stroke-width="1.3"/><path d="M1877 302l-6 7h3.7v6h4.6v-6h3.7z" fill="#b3b3b3"/><path d="M1894.3 298l-6 7h3.7v10h4.6v-10h3.7z" fill="#b3b3b3"/><rect x="1868" y="363" width="35" height="2.2" fill="#7a7a7a"/><rect x="1871.5" y="343.5" width="11.5" height="16" fill="#dcdcdc" stroke="#a8a8a8" stroke-width="1.3"/><circle cx="1894.3" cy="353.9" r="6" fill="#dcdcdc" stroke="#a8a8a8" stroke-width="1.3"/><path d="M1877 339.5l-6-7h3.7v-5h4.6v5h3.7z" fill="#b3b3b3"/><path d="M1894.3 346l-6-7h3.7v-11h4.6v11h3.7z" fill="#b3b3b3"/><rect x="1884.3" y="372.7" width="2.2" height="40" fill="#7a7a7a"/><rect x="1877.8" y="378" width="16" height="11" fill="#dcdcdc" stroke="#a8a8a8" stroke-width="1.3"/><circle cx="1885.6" cy="400.9" r="6" fill="#dcdcdc" stroke="#a8a8a8" stroke-width="1.3"/><path d="M1875.5 383.5l-7-6v3.7h-3v4.6h3v3.7z" fill="#b3b3b3"/><path d="M1875.5 401l-7-6v3.7h-3v4.6h3v3.7z" fill="#b3b3b3"/><path d="M1896 383.5l7-6v3.7h3v4.6h-3v3.7z" fill="#b3b3b3"/><path d="M1896 401l7-6v3.7h3v4.6h-3v3.7z" fill="#b3b3b3"/><rect x="1866" y="439" width="38" height="2.2" fill="#7a7a7a"/><circle cx="1877" cy="440" r="6" fill="#dcdcdc" stroke="#a8a8a8" stroke-width="1.3"/><rect x="1888.5" y="432.5" width="12" height="16" fill="#dcdcdc" stroke="#a8a8a8" stroke-width="1.3"/><path d="M1877 430l-6-7h3.7v-3h4.6v3h3.7z" fill="#b3b3b3"/><path d="M1894.5 430l-6-7h3.7v-3h4.6v3h3.7z" fill="#b3b3b3"/><path d="M1877 450l-6 7h3.7v3h4.6v-3h3.7z" fill="#b3b3b3"/><path d="M1894.5 450l-6 7h3.7v3h4.6v-3h3.7z" fill="#b3b3b3"/><rect x="1867" y="466.5" width="37" height="1.3" fill="#a8bcd8"/><rect x="1867" y="479" width="2.2" height="32" fill="#7a7a7a"/><rect x="1902" y="479" width="2.2" height="32" fill="#7a7a7a"/><rect x="1881" y="483.5" width="9.5" height="23" fill="#dcdcdc" stroke="#a8a8a8" stroke-width="1.3"/><path d="M1879 495l-7-6v3.7h-1v4.6h1v3.7z" fill="#b3b3b3"/><path d="M1893 495l7-6v3.7h1v4.6h-1v3.7z" fill="#b3b3b3"/><rect x="1870" y="524" width="32" height="2.2" fill="#7a7a7a"/><rect x="1870" y="559" width="32" height="2.2" fill="#7a7a7a"/><rect x="1873.5" y="538" width="24.5" height="9" fill="#dcdcdc" stroke="#a8a8a8" stroke-width="1.3"/><path d="M1886 536l-6-7h3.7v-1h4.6v1h3.7z" fill="#b3b3b3"/><path d="M1886 549l-6 7h3.7v1h4.6v-1h3.7z" fill="#b3b3b3"/><rect x="1866.5" y="573.5" width="40" height="33" rx="4" fill="#ececec" stroke="#c6c6c6" stroke-width="1"/><rect x="1881" y="578" width="9.5" height="24" fill="#dcdcdc" stroke="#a8a8a8" stroke-width="1.3"/><path d="M1879 590l-7-6v3.7h-1v4.6h1v3.7z" fill="#b3b3b3"/><path d="M1893 590l7-6v3.7h1v4.6h-1v3.7z" fill="#b3b3b3"/><rect x="1866.5" y="620" width="40" height="34.5" rx="4" fill="#ececec" stroke="#c6c6c6" stroke-width="1"/><rect x="1873.5" y="633" width="24.5" height="9.5" fill="#dcdcdc" stroke="#a8a8a8" stroke-width="1.3"/><path d="M1886 631l-6-7h3.7v-1h4.6v1h3.7z" fill="#b3b3b3"/><path d="M1886 644l-6 7h3.7v1h4.6v-1h3.7z" fill="#b3b3b3"/><rect x="1867" y="663.5" width="37" height="1.3" fill="#a8bcd8"/><rect x="1866.5" y="684.5" width="8.5" height="16" fill="#dcdcdc" stroke="#a8a8a8" stroke-width="1.3"/><rect x="1896" y="684.5" width="10" height="16" fill="#dcdcdc" stroke="#a8a8a8" stroke-width="1.3"/><path d="M1877 693l5-4.5v3h7v-3l5 4.5l-5 4.5v-3h-7v3z" fill="#b3b3b3"/><rect x="1877.5" y="720.5" width="16.5" height="8.5" fill="#dcdcdc" stroke="#a8a8a8" stroke-width="1.3"/><rect x="1877.5" y="750.5" width="16.5" height="9" fill="#dcdcdc" stroke="#a8a8a8" stroke-width="1.3"/><path d="M1885.7 731l4.5 5h-3v7h3l-4.5 5l-4.5-5h3v-7h-3z" fill="#b3b3b3"/><rect x="1867" y="766" width="37" height="1.3" fill="#a8bcd8"/><path d="M 1878.5 791.5 Q 1883 780.5 1891 781.3 Q 1900.5 782.5 1900.5 794 Q 1897.5 786.5 1891 786.3 Q 1885.5 786.3 1883.5 793.5 Z" fill="#c4c4c4"/><path d="M 1873 782.7 L 1873 797.6 L 1888 797.6 Z" fill="#b5b5b5"/><text x="1874" y="811.3" font-family="Liberation Sans" font-size="13.5" fill="#979797" stroke="#979797" stroke-width="0.4">90°</text><path d="M1867 830l0 15h15z M1905 830l0 15h-15z" fill="#b5b5b5"/><path d="M1874 838 Q1880 827.5 1886.3 827.8 Q1893 827.5 1898 838 L1893.5 841 Q1890 833 1886.3 833 Q1882.5 833 1879 841 Z" fill="#c4c4c4"/><text x="1870.5" y="859.3" font-family="Liberation Sans" font-size="13.5" fill="#979797" stroke="#979797" stroke-width="0.4" textLength="31" lengthAdjust="spacingAndGlyphs">180°</text><path d="M 1895 886.5 Q 1890.5 875.5 1882.5 876.3 Q 1873 877.5 1873 889 Q 1876 881.5 1882.5 881.3 Q 1888 881.3 1890 888.5 Z" fill="#c4c4c4"/><path d="M 1900.5 877.7 L 1900.5 892.6 L 1885.5 892.6 Z" fill="#b5b5b5"/><text x="1876" y="906.5" font-family="Liberation Sans" font-size="13.5" fill="#979797" stroke="#979797" stroke-width="0.4">90°</text><path d="M 1878.5 933.5 Q 1883 922.5 1891 923.3 Q 1900.5 924.5 1900.5 936 Q 1897.5 928.5 1891 928.3 Q 1885.5 928.3 1883.5 935.5 Z" fill="#c4c4c4"/><path d="M 1873 924.7 L 1873 939.6 L 1888 939.6 Z" fill="#b5b5b5"/><text x="1879.5" y="953.8" font-family="Liberation Sans" font-size="13.5" fill="#979797" stroke="#979797" stroke-width="0.4">1°</text><path d="M 1895 980.5 Q 1890.5 969.5 1882.5 970.3 Q 1873 971.5 1873 983 Q 1876 975.5 1882.5 975.3 Q 1888 975.3 1890 982.5 Z" fill="#c4c4c4"/><path d="M 1900.5 971.7 L 1900.5 986.6 L 1885.5 986.6 Z" fill="#b5b5b5"/><text x="1879.5" y="1001" font-family="Liberation Sans" font-size="13.5" fill="#979797" stroke="#979797" stroke-width="0.4">1°</text><path d="M1900 1015v6.5M1903.5 1015v6.5" stroke="#222" stroke-width="1.6"/><path d="M1901.5 1015.5v7" stroke="#fff" stroke-width="0.9"/></svg><!--/ICONS-->
<!-- dialog shadow -->
<div class="abs" style="left:556px;top:263px;width:792px;height:616px;box-shadow:0 0 8px 1px rgba(40,60,90,0.22), 5px 6px 12px rgba(40,60,90,0.34)"></div>
<div id="dlg" class="abs" style="left:556px;top:263px;width:792px;height:616px;background:#f0f0f0;border:1px solid #7f8b99;border-right-color:#8d98a6;border-bottom-color:#9aa4b0">
  <div class="abs" style="left:0;top:0;width:790px;height:113px;background:#fff"></div>
  <svg class="abs" style="left:10px;top:8px" width="20" height="20" viewBox="0 0 20 20"><rect x="0" y="0" width="20" height="20" rx="2" fill="#0a8cc4"/><path d="M8.8 0H20V12H10.8a2 2 0 0 1-2-2Z" fill="#fff"/><path d="M9.2 0H18a2 2 0 0 1 2 2V12Z" fill="#ffa10a"/></svg>
  <div class="abs" style="left:36px;top:10px;font-size:14.5px;color:#858585;white-space:nowrap">Assistent für neue Dokumente</div>
  <svg class="abs" style="left:763px;top:13px" width="13" height="13"><path d="M0.5 0.5L12.5 12.5M12.5 0.5L0.5 12.5" stroke="#555" stroke-width="1.1"/></svg>
  <svg class="abs" style="left:493px;top:38px" width="297" height="75" viewBox="0 0 297 75">
<defs>
<linearGradient id="bg" x1="0" x2="1" y1="0" y2="0"><stop offset="0" stop-color="#ffffff"/><stop offset="0.05" stop-color="#f8fbfd"/><stop offset="0.17" stop-color="#e2eff6"/><stop offset="0.34" stop-color="#bcd9e9"/><stop offset="0.5" stop-color="#80bad7"/><stop offset="0.67" stop-color="#4d9fc8"/><stop offset="1" stop-color="#3890bc"/></linearGradient>
<linearGradient id="fade" x1="0" x2="1" y1="0" y2="0"><stop offset="0" stop-color="#fff" stop-opacity="1"/><stop offset="0.04" stop-color="#fff" stop-opacity="0.7"/><stop offset="0.2" stop-color="#fff" stop-opacity="0"/></linearGradient>
<filter id="sh" x="-30%" y="-30%" width="160%" height="160%"><feGaussianBlur in="SourceAlpha" stdDeviation="1.5"/><feOffset dx="1" dy="2"/><feComponentTransfer><feFuncA type="linear" slope="0.6"/></feComponentTransfer><feMerge><feMergeNode/><feMergeNode in="SourceGraphic"/></feMerge></filter>
</defs>
<rect width="297" height="75" fill="url(#bg)"/>
<g fill="#fff" fill-opacity="0.12" font-family="Liberation Sans" font-size="16">
<text x="127" y="17" font-weight="bold" textLength="170" lengthAdjust="spacingAndGlyphs">0111010001010</text>
<text x="150" y="60">10101010</text>
<text x="140" y="74">010101010</text>
<text x="230" y="30">10</text>
</g>
<g fill="#fff" fill-opacity="0.28">
<rect x="0" y="21" width="297" height="1"/>
<rect x="0" y="49" width="297" height="1"/>
<rect x="85" y="21" width="1" height="28"/>
<rect x="8" y="53" width="1" height="22"/><rect x="12" y="53" width="2" height="22"/><rect x="18" y="53" width="3" height="22"/><rect x="23" y="53" width="3" height="22"/><rect x="28" y="53" width="1" height="22"/><rect x="30" y="53" width="3" height="22"/><rect x="36" y="53" width="1" height="22"/><rect x="41" y="53" width="3" height="22"/><rect x="48" y="53" width="1" height="22"/><rect x="52" y="53" width="1" height="22"/><rect x="56" y="53" width="3" height="22"/><rect x="63" y="53" width="1" height="22"/><rect x="66" y="53" width="1" height="22"/><rect x="69" y="53" width="2" height="22"/><rect x="73" y="53" width="2" height="22"/><rect x="79" y="53" width="3" height="22"/><rect x="86" y="53" width="1" height="22"/><rect x="91" y="53" width="3" height="22"/><rect x="98" y="53" width="1" height="22"/><rect x="100" y="53" width="1" height="22"/><rect x="103" y="53" width="1" height="22"/><rect x="108" y="53" width="1" height="22"/><rect x="110" y="53" width="1" height="22"/><rect x="112" y="53" width="1" height="22"/><rect x="117" y="53" width="3" height="22"/><rect x="121" y="53" width="3" height="22"/><rect x="128" y="53" width="3" height="22"/><rect x="134" y="53" width="2" height="22"/><rect x="138" y="53" width="2" height="22"/><rect x="143" y="53" width="2" height="22"/><rect x="147" y="53" width="1" height="22"/><rect x="149" y="53" width="2" height="22"/>
</g>
<g fill="#fff" fill-opacity="0.36" font-family="Liberation Sans">
<g opacity="0.38" fill-opacity="1" stroke="#fff" stroke-width="0.7"><text x="14" y="21" font-size="26" textLength="113" lengthAdjust="spacingAndGlyphs">23597001</text><text x="93" y="50" font-size="25" textLength="69" lengthAdjust="spacingAndGlyphs">A7-118</text></g>
<text x="18" y="48" font-size="12" font-weight="bold" textLength="52" lengthAdjust="spacingAndGlyphs">MAY2000</text>

<rect x="88" y="25" width="45" height="1.2" fill-opacity="0.35"/>
</g>
<rect x="0" y="0" width="297" height="75" fill="url(#fade)"/>
<g filter="url(#sh)">
<rect x="169" y="17.5" width="56" height="23" rx="3" fill="#fff" stroke="#222" stroke-width="1.2"/>
<rect x="158.5" y="48" width="18" height="13" rx="1.5" fill="#fff" stroke="#222" stroke-width="1.2"/>
<rect x="218.5" y="29.5" width="35" height="41" rx="3" fill="#fff" stroke="#222" stroke-width="1.2"/>
<circle cx="270.7" cy="26.5" r="22" fill="#fff"/>
</g>
<circle cx="270.7" cy="26.5" r="7.3" fill="#2f86b0" stroke="#1f6d94" stroke-width="0.8"/>
<g fill="#111"><rect x="172" y="21" width="1" height="14"/><rect x="175" y="21" width="2" height="14"/><rect x="179" y="21" width="1" height="14"/><rect x="182" y="21" width="1" height="14"/><rect x="185" y="21" width="1" height="14"/><rect x="187" y="21" width="1" height="14"/><rect x="190" y="21" width="1" height="14"/><rect x="192" y="21" width="1" height="14"/><rect x="194" y="21" width="2" height="14"/>
<rect x="161" y="50" width="1" height="7"/><rect x="163" y="50" width="1" height="7"/><rect x="166" y="50" width="1.5" height="7"/><rect x="169" y="50" width="1" height="7"/><rect x="172" y="50" width="1.5" height="7"/>
<rect x="261" y="38" width="1" height="9"/><rect x="263" y="38" width="1.5" height="9"/><rect x="266" y="38" width="1" height="9"/><rect x="269" y="38" width="1" height="9"/><rect x="272" y="38" width="1.5" height="9"/><rect x="275" y="38" width="1" height="9"/>
</g>
<g fill="#444">
<rect x="201" y="22" width="8" height="1.2"/><rect x="201" y="25.5" width="14" height="1.2"/><rect x="201" y="29" width="12" height="1.2"/><rect x="201" y="32.5" width="14" height="1.2"/><rect x="201" y="36" width="11" height="1.2"/>
<rect x="172" y="37.5" width="22" height="1"/>
<rect x="238" y="34" width="7" height="1"/><rect x="238" y="38" width="12" height="1"/><rect x="238" y="42" width="11" height="1"/><rect x="238" y="46" width="11" height="1"/>
<rect x="221" y="52" width="29" height="1.3"/>
<rect x="222" y="56" width="6" height="1.2"/><rect x="222" y="59.5" width="14" height="1.2"/><rect x="222" y="63" width="12" height="1.2"/><rect x="222" y="66.5" width="14" height="1.2"/>
<rect x="252" y="25" width="7" height="0.9"/><rect x="255" y="27.3" width="2" height="0.9"/><rect x="282" y="25" width="6" height="0.9"/><rect x="282" y="27.3" width="7" height="0.9"/>
<path d="M260 15Q271 8 282 15" stroke="#777" stroke-width="1" fill="none" stroke-dasharray="3 2"/>
</g>
<g fill="#111"><rect x="222.00" y="32.30" width="1.65" height="1.65"/><rect x="223.55" y="32.30" width="1.65" height="1.65"/><rect x="225.10" y="32.30" width="1.65" height="1.65"/><rect x="226.65" y="32.30" width="1.65" height="1.65"/><rect x="231.30" y="32.30" width="1.65" height="1.65"/><rect x="232.85" y="32.30" width="1.65" height="1.65"/><rect x="234.40" y="32.30" width="1.65" height="1.65"/><rect x="222.00" y="33.85" width="1.65" height="1.65"/><rect x="225.10" y="33.85" width="1.65" height="1.65"/><rect x="226.65" y="33.85" width="1.65" height="1.65"/><rect x="228.20" y="33.85" width="1.65" height="1.65"/><rect x="231.30" y="33.85" width="1.65" height="1.65"/><rect x="234.40" y="33.85" width="1.65" height="1.65"/><rect x="222.00" y="35.40" width="1.65" height="1.65"/><rect x="223.55" y="35.40" width="1.65" height="1.65"/><rect x="225.10" y="35.40" width="1.65" height="1.65"/><rect x="226.65" y="35.40" width="1.65" height="1.65"/><rect x="228.20" y="35.40" width="1.65" height="1.65"/><rect x="231.30" y="35.40" width="1.65" height="1.65"/><rect x="232.85" y="35.40" width="1.65" height="1.65"/><rect x="234.40" y="35.40" width="1.65" height="1.65"/><rect x="223.55" y="36.95" width="1.65" height="1.65"/><rect x="225.10" y="36.95" width="1.65" height="1.65"/><rect x="226.65" y="36.95" width="1.65" height="1.65"/><rect x="228.20" y="36.95" width="1.65" height="1.65"/><rect x="229.75" y="36.95" width="1.65" height="1.65"/><rect x="231.30" y="36.95" width="1.65" height="1.65"/><rect x="222.00" y="38.50" width="1.65" height="1.65"/><rect x="226.65" y="38.50" width="1.65" height="1.65"/><rect x="229.75" y="38.50" width="1.65" height="1.65"/><rect x="234.40" y="38.50" width="1.65" height="1.65"/><rect x="222.00" y="40.05" width="1.65" height="1.65"/><rect x="223.55" y="40.05" width="1.65" height="1.65"/><rect x="225.10" y="40.05" width="1.65" height="1.65"/><rect x="226.65" y="40.05" width="1.65" height="1.65"/><rect x="228.20" y="40.05" width="1.65" height="1.65"/><rect x="229.75" y="40.05" width="1.65" height="1.65"/><rect x="231.30" y="40.05" width="1.65" height="1.65"/><rect x="232.85" y="40.05" width="1.65" height="1.65"/><rect x="234.40" y="40.05" width="1.65" height="1.65"/><rect x="222.00" y="41.60" width="1.65" height="1.65"/><rect x="223.55" y="41.60" width="1.65" height="1.65"/><rect x="225.10" y="41.60" width="1.65" height="1.65"/><rect x="226.65" y="41.60" width="1.65" height="1.65"/><rect x="228.20" y="41.60" width="1.65" height="1.65"/><rect x="231.30" y="41.60" width="1.65" height="1.65"/><rect x="234.40" y="41.60" width="1.65" height="1.65"/><rect x="222.00" y="43.15" width="1.65" height="1.65"/><rect x="225.10" y="43.15" width="1.65" height="1.65"/><rect x="228.20" y="43.15" width="1.65" height="1.65"/><rect x="229.75" y="43.15" width="1.65" height="1.65"/><rect x="222.00" y="44.70" width="1.65" height="1.65"/><rect x="223.55" y="44.70" width="1.65" height="1.65"/><rect x="225.10" y="44.70" width="1.65" height="1.65"/><rect x="228.20" y="44.70" width="1.65" height="1.65"/><rect x="229.75" y="44.70" width="1.65" height="1.65"/><rect x="231.30" y="44.70" width="1.65" height="1.65"/><rect x="232.85" y="44.70" width="1.65" height="1.65"/></g>
</svg>
  <div class="abs" style="left:13px;top:50px;font-size:14px;font-weight:bold;letter-spacing:0.35px;color:#000;white-space:nowrap">Abstände</div>
  <div class="abs" style="left:31px;top:68px;font-size:13.4px;color:#000;white-space:nowrap">Legen Sie die Seitenränder fest.</div>
  <div class="abs" style="left:0;top:113px;width:790px;height:1px;background:#777"></div>

  <div class="abs lbl" style="left:30px;top:158px">Oben:</div>
  <div class="abs lbl" style="left:30px;top:191px">Unten:</div>
  <div class="abs lbl" style="left:30px;top:223px">Links:</div>
  <div class="abs lbl" style="left:30px;top:256px">Rechts:</div>
  <div class="abs inp" style="left:91px;top:153.3px"><span class="v">1,0</span><span class="u">mm</span></div>
  <div class="abs inp" style="left:91px;top:185.3px"><span class="v">1,0</span><span class="u">mm</span></div>
  <div class="abs inp" style="left:91px;top:218.3px"><span class="v">1,0</span><span class="u">mm</span></div>
  <div class="abs inp" style="left:91px;top:250.3px"><span class="v">1,0</span><span class="u">mm</span></div>

  <div class="abs lbl" style="left:477px;top:125px">Vorschau</div>
  <div class="abs" style="left:477px;top:143px;width:248px;height:327px;background:linear-gradient(#c9dcf3,#84a0c0);border-top:1px solid #a0a0a0;border-left:1px solid #9a9ea6;border-right:1px solid #fff;border-bottom:1px solid #fff"></div>
  <div class="abs" style="left:505.5px;top:253px;width:194px;height:109.5px;background:#fff;box-shadow:0 0 18px 7px rgba(65,82,108,0.55)"></div>
  <div class="abs" style="left:510.5px;top:258px;width:184.5px;height:101px;border:1.6px solid #111"></div>
  <div class="abs lbl" style="left:511px;top:476px;letter-spacing:0.18px">Seitengröße:</div><div class="abs lbl" style="left:597px;top:476px;letter-spacing:0.17px">50,8 x 28,6 mm</div>
  <div class="abs lbl" style="left:504.5px;top:496px;letter-spacing:0.1px">Vorlagengröße:</div><div class="abs lbl" style="left:604.5px;top:496px;letter-spacing:0.17px">48,8 x 26,6 mm</div>

  <div class="abs" style="left:2px;top:555px;width:787px;height:1px;background:#a0a0a0"></div>
  <div class="abs" style="left:2px;top:556px;width:787px;height:1px;background:#fff"></div>
  <div class="abs btn" style="left:304px;top:572px;width:71px">&lt; <u>Z</u>urück</div>
  <div class="abs btn" style="left:378px;top:572px;width:71px">Weiter &gt;</div>
  <div class="abs btn" style="left:471px;top:572px;width:89px">Fertigstellen</div>
  <div class="abs btn" style="left:569px;top:572px;width:79px">Abbrechen</div>
</div>
<div id="status" class="abs"></div>
</body></html>
